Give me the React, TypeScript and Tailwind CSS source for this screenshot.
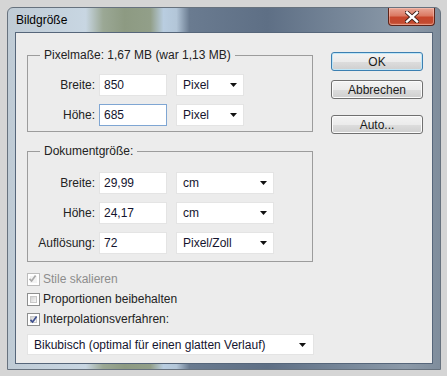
import React from "react";

const FONT = "font-['Liberation_Sans',Arial,sans-serif]";

function Arrow() {
  return (
    <svg width="7" height="4" viewBox="0 0 7 4" className="shrink-0">
      <path d="M0 0h7L3.5 4z" fill="#111" />
    </svg>
  );
}

function Select({ value, width }: { value: string; width: string }) {
  return (
    <div
      className={`${width} h-[22px] bg-white border border-[#e4e4e4] flex items-center justify-between pl-[6px] pr-[6px] text-[#14142e]`}
    >
      <span>{value}</span>
      <Arrow />
    </div>
  );
}

function Field({
  label,
  value,
  unit,
  selectWidth,
  focused,
}: {
  label: string;
  value: string;
  unit: string;
  selectWidth: string;
  focused?: boolean;
}) {
  return (
    <div className="flex items-center h-[22px]">
      <span className="w-[67px] text-right text-[#222]">{label}</span>
      <div
        className={`ml-[4px] w-[68px] h-[22px] bg-white border flex items-center pl-[4px] text-[#14142e] ${
          focused ? "border-[#7fa6d3]" : "border-[#e4e4e4]"
        }`}
      >
        {value}
      </div>
      <div className="ml-[9px]">
        <Select value={unit} width={selectWidth} />
      </div>
    </div>
  );
}

function Button({ label, primary }: { label: string; primary?: boolean }) {
  return (
    <div
      className={`w-[92px] h-[19px] rounded-[3px] border flex items-center justify-center text-[#1a1a1a] bg-[linear-gradient(#f3f3f3_0%,#ebebeb_50%,#dddddd_51%,#cfcfcf_100%)] ${
        primary
          ? "border-[#3c7fb1] shadow-[inset_0_0_0_1px_#bfe6f7]"
          : "border-[#707070] shadow-[inset_0_0_0_1px_#fbfbfb]"
      }`}
    >
      {label}
    </div>
  );
}

function Check({ checked, disabled }: { checked?: boolean; disabled?: boolean }) {
  return (
    <div
      className={`w-[13px] h-[13px] border p-[2px] bg-white ${
        disabled ? "border-[#bcbcbc]" : "border-[#8e8f8f]"
      }`}
    >
      <div
        className={`w-full h-full relative ${
          disabled
            ? "bg-[#f3f3f3]"
            : "bg-[linear-gradient(135deg,#d2d2d2,#f7f7f7)] border border-[#c8c8c8]"
        }`}
      >
        {checked && (
          <svg
            width="11"
            height="11"
            viewBox="0 0 11 11"
            className="absolute left-[-3px] top-[-3px]"
          >
            <path
              d="M2.5 5.8 L4.6 8 L8.6 2.6"
              fill="none"
              stroke={disabled ? "#a9a9a9" : "#3d4f8f"}
              strokeWidth="1.7"
            />
          </svg>
        )}
      </div>
    </div>
  );
}

function CheckRow({
  label,
  checked,
  disabled,
}: {
  label: string;
  checked?: boolean;
  disabled?: boolean;
}) {
  return (
    <div className="flex items-center h-[20px] gap-[3px]">
      <Check checked={checked} disabled={disabled} />
      <span className={disabled ? "text-[#8d8d8d]" : "text-[#222]"}>{label}</span>
    </div>
  );
}

function CloseButton() {
  return (
    <div className="w-[47px] h-[18px] rounded-b-[4px] border border-t-0 border-[#5e2419] flex items-center justify-center bg-[linear-gradient(#e9a797_0%,#db7a63_45%,#c7462b_55%,#c24a30_85%,#d76d4f_100%)] shadow-[inset_0_0_0_1px_rgba(255,210,200,0.45)]">
      <svg width="14" height="12" viewBox="0 0 14 12">
        <path
          d="M2 1.5 L12 10.5 M12 1.5 L2 10.5"
          stroke="#3a1c16"
          strokeWidth="4.2"
          strokeLinecap="square"
        />
        <path
          d="M2 1.5 L12 10.5 M12 1.5 L2 10.5"
          stroke="#ffffff"
          strokeWidth="2.4"
          strokeLinecap="square"
        />
      </svg>
    </div>
  );
}

export default function App() {
  return (
    <div
      className={`w-[447px] h-[376px] bg-[#d5d5d5] pt-[7px] pl-[7px] pr-[6px] pb-[6px] text-[12px] leading-[16px] ${FONT}`}
    >
      <div className="h-full flex flex-col border border-[#67727e] rounded-t-[6px] bg-[linear-gradient(90deg,#bfcbd5_0%,#c8d6e2_18%,#9ba895_22%,#8d9a82_27%,#929f89_33%,#b9cde0_36%,#b3c6d8_39%,#6a7b90_42%,#5e6f85_60%,#7a8a9c_80%,#8c9aa9_92%,#7f8d9c_100%)]">
        {/* title bar */}
        <div className="h-[24px] flex items-start justify-between pl-[8px] pr-[5px]">
          <span className="text-black mt-[4px]">Bildgröße</span>
          <CloseButton />
        </div>

        {/* dialog body */}
        <div className="flex-1 mx-[7px] mb-[5px] border border-[#56667a] bg-[#ececec] flex pt-[14px] pl-[11px]">
          <div className="w-[286px] flex flex-col">
            <fieldset className="border border-[#9c9c9c] pt-[11px] pb-[5px] flex flex-col gap-[8px]">
              <legend className="ml-[12px] px-[4px] text-[#222]">
                Pixelmaße: 1,67 MB (war 1,13 MB)
              </legend>
              <Field label="Breite:" value="850" unit="Pixel" selectWidth="w-[68px]" />
              <Field label="Höhe:" value="685" unit="Pixel" selectWidth="w-[68px]" focused />
            </fieldset>

            <fieldset className="mt-[11px] border border-[#9c9c9c] pt-[13px] pb-[7px] flex flex-col gap-[8px]">
              <legend className="ml-[12px] px-[4px] text-[#222]">Dokumentgröße:</legend>
              <Field label="Breite:" value="29,99" unit="cm" selectWidth="w-[98px]" />
              <Field label="Höhe:" value="24,17" unit="cm" selectWidth="w-[98px]" />
              <Field label="Auflösung:" value="72" unit="Pixel/Zoll" selectWidth="w-[98px]" />
            </fieldset>

            <div className="mt-[7px] flex flex-col">
              <CheckRow label="Stile skalieren" checked disabled />
              <CheckRow label="Proportionen beibehalten" />
              <CheckRow label="Interpolationsverfahren:" checked />
            </div>

            <div className="mt-[5px] w-[287px] h-[21px] bg-white border border-[#e4e4e4] flex items-center justify-between pl-[6px] pr-[7px] text-[#14142e]">
              <span>Bikubisch (optimal für einen glatten Verlauf)</span>
              <Arrow />
            </div>
          </div>

          <div className="ml-[18px] mt-[5px] flex flex-col">
            <Button label="OK" primary />
            <div className="mt-[9px]">
              <Button label="Abbrechen" />
            </div>
            <div className="mt-[16px]">
              <Button label="Auto..." />
            </div>
          </div>
        </div>
      </div>
    </div>
  );
}
